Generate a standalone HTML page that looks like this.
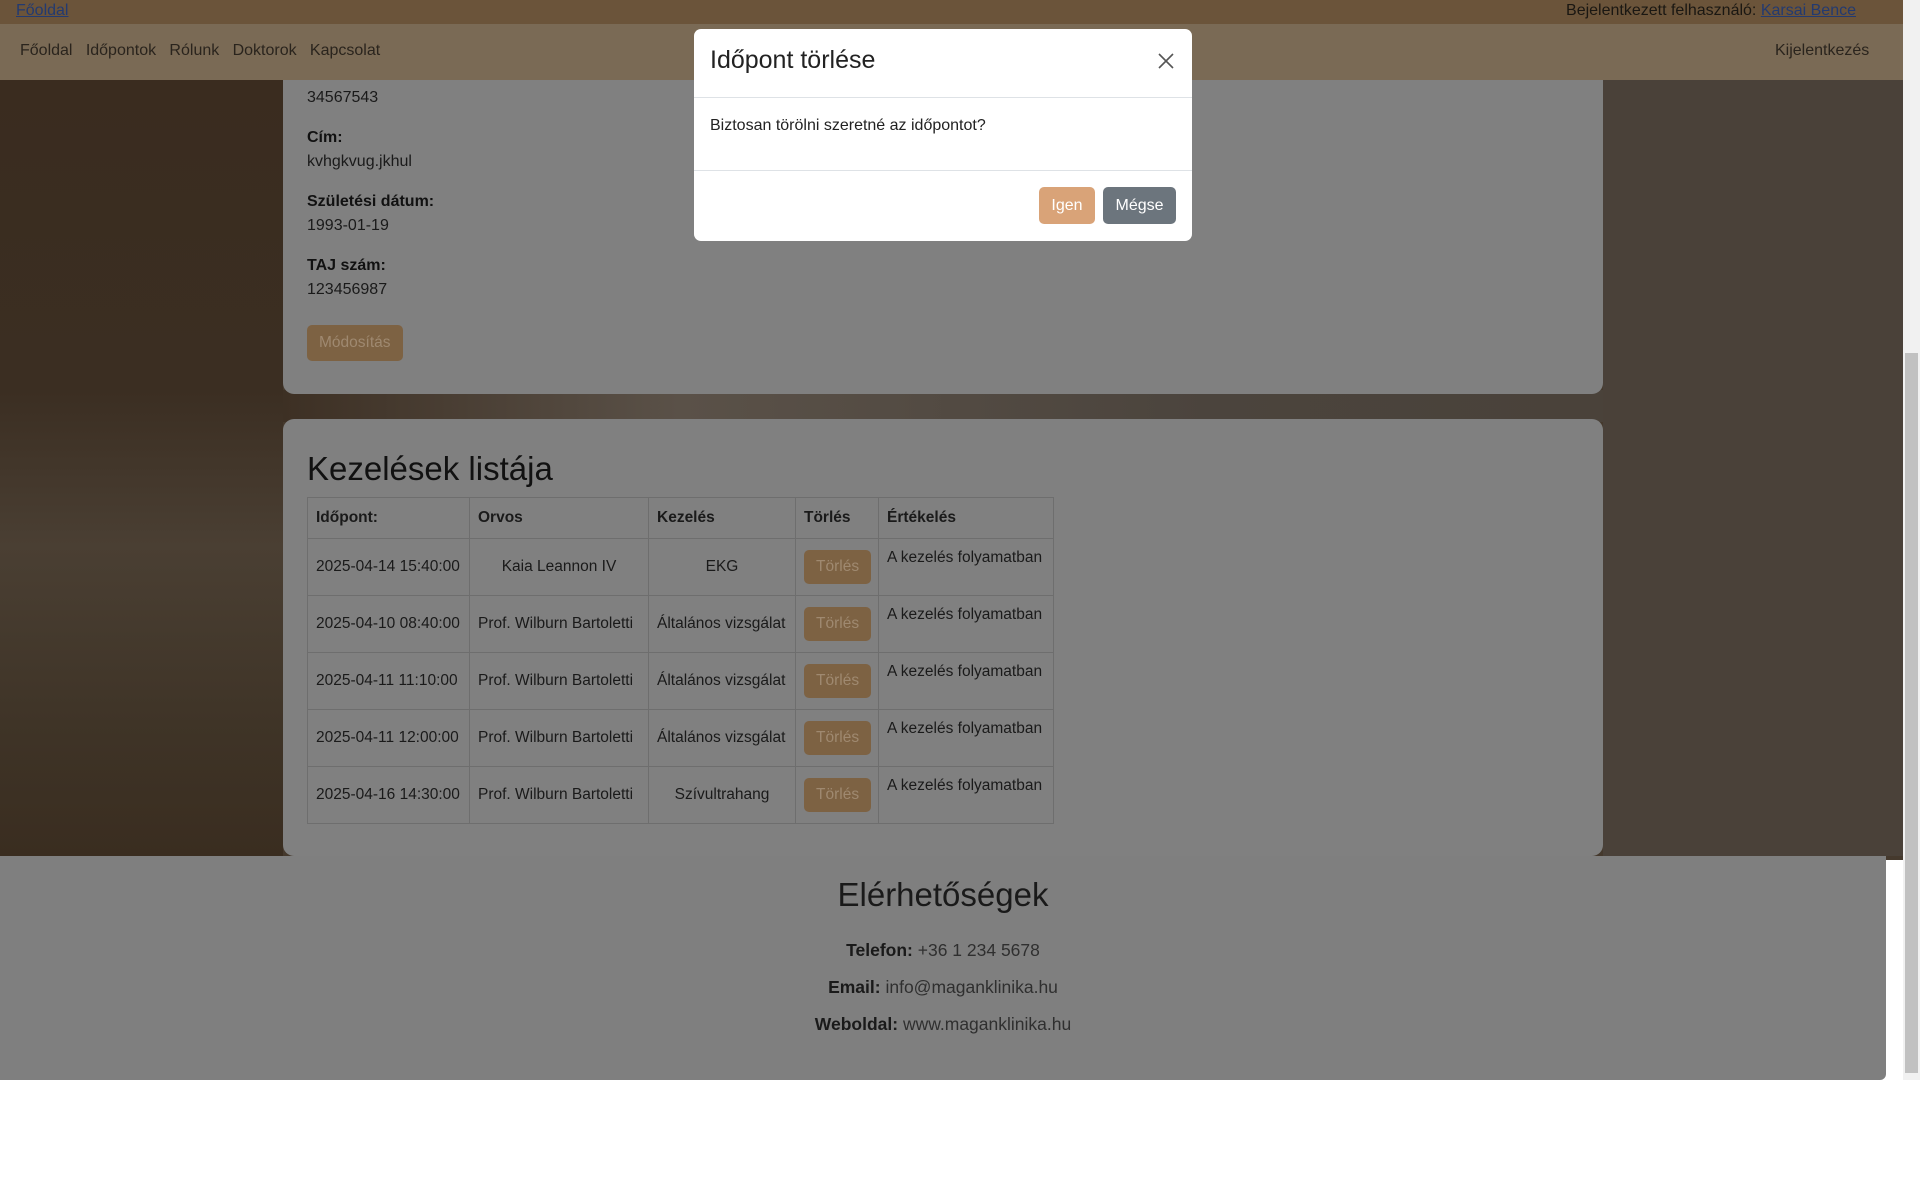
<!DOCTYPE html>
<html><head><meta charset="utf-8"><style>
*{box-sizing:border-box;margin:0;padding:0}
body{width:1920px;height:1177px;position:relative;background:#fff;font-family:"Liberation Sans",sans-serif;overflow:hidden;color:#111}
.abs{position:absolute}
.base{left:0;top:60px;width:1903px;height:800px;background:#45392d}
.bgL{left:0;top:80px;width:283px;height:776px;background:linear-gradient(180deg,#3a2c1f 0%,#3b2e22 40%,#4a3f33 60%,#3e3326 85%,#3a2d20 100%)}
.bgM{left:283px;top:390px;width:1320px;height:32px;background:linear-gradient(90deg,#3d3024,#5a5148 30%,#4b443d 70%,#4a423a)}
.bgR{left:1603px;top:80px;width:300px;height:776px;background:#4a4139}
.top{left:0;top:0;width:1903px;height:24px;background:#6b543a;font-size:16px}
.nav{left:0;top:24px;width:1903px;height:56px;background:#7a6a55;font-size:16px;color:#2a241d}
.card{background:#808080;border-radius:11px}
.lbl{font-weight:bold;font-size:16px;color:#111}
.val{font-size:16px;color:#1a1a1a}
table{border-collapse:collapse;font-size:15.5px;color:#1a1a1a;table-layout:fixed;white-space:nowrap}
td,th{border:1px solid #6e6e6e;padding:0 8px;height:57px;overflow:visible}
th{height:41px;text-align:left}
.tb{display:inline-block;background:#7d6243;color:#9f8970;border-radius:5px;padding:8px 12px;font-size:15.5px}
.modal{left:694px;top:29px;width:498px;height:212px;background:#fff;border-radius:7px;z-index:5}
</style></head><body>
<div class="abs base"></div>
<div class="abs bgL"></div><div class="abs bgM"></div><div class="abs bgR"></div>
<div class="abs card" style="left:283px;top:60px;width:1320px;height:334px;border-radius:0 0 11px 11px"></div>
<div class="abs" style="left:307px;top:86px;line-height:24px">
<div class="val">34567543</div>
<div class="lbl" style="margin-top:16px">Cím:</div><div class="val">kvhgkvug.jkhul</div>
<div class="lbl" style="margin-top:16px">Születési dátum:</div><div class="val">1993-01-19</div>
<div class="lbl" style="margin-top:16px">TAJ szám:</div><div class="val">123456987</div>
</div>
<div class="abs tb" style="left:307px;top:325px;padding:9px 12px">Módosítás</div>
<div class="abs top" style="z-index:2"><a class="abs" style="left:16px;top:2px;color:#233a70;text-decoration:underline">Főoldal</a><span class="abs" style="right:47px;top:2px;color:#1a1712">Bejelentkezett felhasználó: <a style="color:#233a70;text-decoration:underline">Karsai Bence</a></span></div>
<div class="abs nav" style="z-index:2"><span class="abs" style="left:20px;top:18px">Főoldal&nbsp;&nbsp;&nbsp;Időpontok&nbsp;&nbsp;&nbsp;Rólunk&nbsp;&nbsp;&nbsp;Doktorok&nbsp;&nbsp;&nbsp;Kapcsolat</span><span class="abs" style="left:1775px;top:18px">Kijelentkezés</span></div>
<div class="abs card" style="left:283px;top:419px;width:1320px;height:437px"></div>
<div class="abs" style="left:307px;top:450px;font-size:33px;color:#111">Kezelések listája</div>
<table class="abs" style="left:307px;top:497px;width:746px">
<colgroup><col style="width:162px"><col style="width:179px"><col style="width:147px"><col style="width:83px"><col style="width:175px"></colgroup>
<tr><th>Időpont:</th><th>Orvos</th><th>Kezelés</th><th>Törlés</th><th>Értékelés</th></tr>
<tr><td>2025-04-14 15:40:00</td><td style="text-align:center">Kaia Leannon IV</td><td style="text-align:center">EKG</td><td><span class="tb">Törlés</span></td><td style="vertical-align:top;padding-top:10px">A kezelés folyamatban</td></tr>
<tr><td>2025-04-10 08:40:00</td><td>Prof. Wilburn Bartoletti</td><td>Általános vizsgálat</td><td><span class="tb">Törlés</span></td><td style="vertical-align:top;padding-top:10px">A kezelés folyamatban</td></tr>
<tr><td>2025-04-11 11:10:00</td><td>Prof. Wilburn Bartoletti</td><td>Általános vizsgálat</td><td><span class="tb">Törlés</span></td><td style="vertical-align:top;padding-top:10px">A kezelés folyamatban</td></tr>
<tr><td>2025-04-11 12:00:00</td><td>Prof. Wilburn Bartoletti</td><td>Általános vizsgálat</td><td><span class="tb">Törlés</span></td><td style="vertical-align:top;padding-top:10px">A kezelés folyamatban</td></tr>
<tr><td>2025-04-16 14:30:00</td><td>Prof. Wilburn Bartoletti</td><td style="text-align:center">Szívultrahang</td><td><span class="tb">Törlés</span></td><td style="vertical-align:top;padding-top:10px">A kezelés folyamatban</td></tr>
</table>
<div class="abs" style="left:0;top:856px;width:1886px;height:224px;background:#7f7f7f;border-radius:0 0 6px 0;text-align:center;color:#1a1a1a">
<div style="font-size:33px;margin-top:20px">Elérhetőségek</div>
<div style="font-size:17.5px;margin-top:18px;line-height:37px"><b>Telefon:</b> <span style="color:#2f2f2f">+36 1 234 5678</span><br><b>Email:</b> <span style="color:#2f2f2f">info@maganklinika.hu</span><br><b>Weboldal:</b> <span style="color:#2f2f2f">www.maganklinika.hu</span></div>
</div>
<div class="abs" style="left:1903px;top:0;width:17px;height:1080px;background:#f1f1f1"><div class="abs" style="left:2px;top:353px;width:13px;height:720px;background:#c1c1c1"></div></div>
<div class="abs modal">
<div class="abs" style="left:16px;top:17px;font-size:25px;color:#222">Időpont törlése</div>
<svg class="abs" style="left:464px;top:24px" width="16" height="16" viewBox="0 0 16 16"><path d="M1 1L15 15M15 1L1 15" stroke="#555" stroke-width="1.6"/></svg>
<div class="abs" style="left:0;top:68px;width:498px;border-top:1px solid #dee2e6"></div>
<div class="abs" style="left:16px;top:88px;font-size:16px;color:#222">Biztosan törölni szeretné az időpontot?</div>
<div class="abs" style="left:0;top:141px;width:498px;border-top:1px solid #dee2e6"></div>
<div class="abs" style="left:345px;top:158px;width:56px;height:37px;background:#d9a378;border-radius:5px;color:#fff;font-size:16px;text-align:center;line-height:37px">Igen</div>
<div class="abs" style="left:409px;top:158px;width:73px;height:37px;background:#6c757d;border-radius:5px;color:#fff;font-size:16px;text-align:center;line-height:37px">Mégse</div>
</div>
</body></html>
